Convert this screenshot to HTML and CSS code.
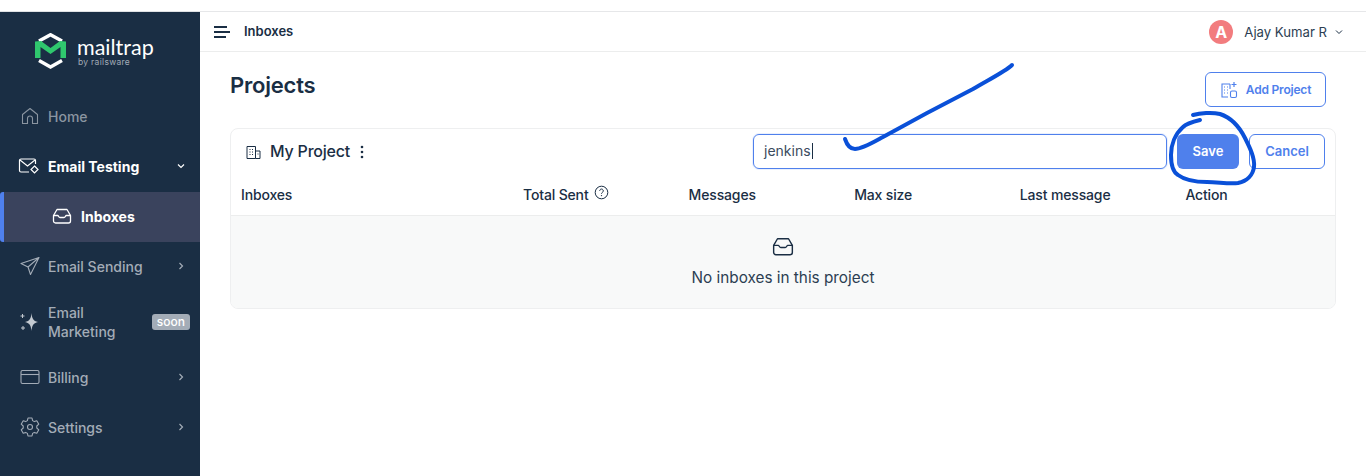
FILE: index.html
```html
<!DOCTYPE html>
<html>
  <head>
    <meta charset="UTF-8" />
    <title>Inboxes - Mailtrap</title>
    <link rel="stylesheet" href="styles.css">
  </head>
  <body>
    <div class="app">
      <aside class="sidebar">
        <div class="logo">
          <svg class="logo-mark" width="31" height="36" viewBox="0 0 31 36" fill="none">
            <path d="M4 8 15.500 1.700 27 8" stroke="#fff" stroke-width="3.400" />
            <path d="M4 27.500 15.500 34 27 27.500" stroke="#fff" stroke-width="3.400" />
            <path d="M0 8.500 6 8l9.500 7L25 8l6 .5V25h-5.500V14l-10 7-10-7v11H0z" fill="#2fc76e" />
          </svg>
          <div class="logo-text">
            <span class="logo-name">mailtrap</span>
            <span class="logo-sub">by railsware</span>
          </div>
        </div>

        <nav>
          <a class="nav-item nav-dim">
            <svg class="nav-icon" viewBox="0 0 20 20" fill="none">
              <path d="M2.500 8.500 10 2.500l7.500 6v9h-5v-5a2.500 2.500 0 0 0-5 0v5h-5z" stroke="currentColor" stroke-width="1.100" stroke-linejoin="round" />
            </svg>
            <span>Home</span>
          </a>

          <a class="nav-item nav-open">
            <svg class="nav-icon nav-icon-wide" viewBox="0 0 22 20" fill="none">
              <path d="M11 16H3a1.500 1.500 0 0 1-1.500-1.500v-10A1.500 1.500 0 0 1 3 3h13a1.500 1.500 0 0 1 1.500 1.500V8" stroke="currentColor" stroke-width="1.200" />
              <path d="m2 4 7.500 6L17 4" stroke="currentColor" stroke-width="1.200" />
              <path d="m16.500 10 3.500 3.500-3.500 3.500-3.500-3.500z" stroke="currentColor" stroke-width="1.200" />
            </svg>
            <span class="nav-label">Email Testing</span>
            <svg class="nav-arrow" viewBox="0 0 10 10" fill="none"><path d="m2 3.500 3 3 3-3" stroke="currentColor" stroke-width="1.200" /></svg>
          </a>

          <a class="nav-sub">
            <svg class="nav-icon" viewBox="0 0 20 20" fill="none">
              <path d="M5 3.500h10l3.500 6V15a2 2 0 0 1-2 2h-13a2 2 0 0 1-2-2V9.500z" stroke="currentColor" stroke-width="1.300" stroke-linejoin="round" />
              <path d="M1.500 9.500h4.200c.8 0 1 2 2.300 2h4c1.300 0 1.500-2 2.300-2h4.200" stroke="currentColor" stroke-width="1.300" />
            </svg>
            <span>Inboxes</span>
          </a>

          <a class="nav-item">
            <svg class="nav-icon" viewBox="0 0 20 20" fill="none">
              <path d="M19 1.500 1 7.500l7 3.500 2.500 7.500zM19 1.500 8 11" stroke="currentColor" stroke-width="1.100" stroke-linejoin="round" />
            </svg>
            <span class="nav-label">Email Sending</span>
            <svg class="nav-arrow" viewBox="0 0 10 10" fill="none"><path d="m3.500 2 3 3-3 3" stroke="currentColor" stroke-width="1.200" /></svg>
          </a>

          <a class="nav-item nav-tall">
            <svg class="nav-icon" viewBox="0 0 20 20" fill="#c3c9d0">
              <path d="M11.500 1c.5 5 1.500 8 6.500 9-5 1-6 4-6.500 9-.5-5-1.500-8-6.500-9 5-1 6-4 6.500-9z" />
              <path d="M.5 4h4M2.500 2v4M1 16h4M3 14v4" stroke="#c3c9d0" stroke-width="1" />
            </svg>
            <span class="nav-label">Email<br />Marketing</span>
            <span class="badge">soon</span>
          </a>

          <a class="nav-item">
            <svg class="nav-icon" viewBox="0 0 20 20" fill="none">
              <rect x="1" y="3.500" width="18" height="13" rx="1.500" stroke="currentColor" stroke-width="1.100" />
              <path d="M1 7.500h18" stroke="currentColor" stroke-width="1.100" />
            </svg>
            <span class="nav-label">Billing</span>
            <svg class="nav-arrow" viewBox="0 0 10 10" fill="none"><path d="m3.500 2 3 3-3 3" stroke="currentColor" stroke-width="1.200" /></svg>
          </a>

          <a class="nav-item">
            <svg class="nav-icon" viewBox="0 0 20 20" fill="none">
              <path d="M8 1h4l.6 2.600 1.700 1 2.500-.8 2 3.400-2 1.800v2l2 1.800-2 3.400-2.500-.8-1.700 1L12 19H8l-.6-2.600-1.700-1-2.500.8-2-3.400 2-1.800v-2l-2-1.800 2-3.400 2.500.8 1.700-1z" stroke="currentColor" stroke-width="1.100" stroke-linejoin="round" />
              <circle cx="10" cy="10" r="2.500" stroke="currentColor" stroke-width="1.100" />
            </svg>
            <span class="nav-label">Settings</span>
            <svg class="nav-arrow" viewBox="0 0 10 10" fill="none"><path d="m3.500 2 3 3-3 3" stroke="currentColor" stroke-width="1.200" /></svg>
          </a>
        </nav>
      </aside>

      <div class="content">
        <header class="topbar">
          <svg class="menu-icon" width="16" height="12" viewBox="0 0 16 12" fill="none">
            <path d="M0 1h13M0 6h16M0 11h12" stroke="#1a2e44" stroke-width="2" />
          </svg>
          <span class="crumb">Inboxes</span>
          <div class="user">
            <span class="avatar">A</span>
            <span>Ajay Kumar R</span>
            <svg width="8" height="8" viewBox="0 0 8 8" fill="none"><path d="m1 2.500 3 3 3-3" stroke="#1a2e44" stroke-width="1" /></svg>
          </div>
        </header>

        <main class="page">
          <div class="page-head">
            <h1>Projects</h1>
            <button class="btn btn-outline btn-add">
              <svg width="18" height="18" viewBox="0 0 18 18" fill="none">
                <path d="M10 3H2v13h6M10 3v5" stroke="#4f80ec" stroke-width="1.100" />
                <path d="M14 1v5M11.500 3.500h5" stroke="#4f80ec" stroke-width="1.200" />
                <rect x="10.500" y="10" width="6" height="6.500" rx="1.500" stroke="#4f80ec" stroke-width="1.100" />
                <path d="M4 6h1M7 6h1M4 9h1M7 9h1M4 12h1M7 12h1" stroke="#4f80ec" stroke-width="1.200" />
              </svg>
              Add Project
            </button>
          </div>

          <section class="card">
            <div class="project-row">
              <svg class="project-icon" width="15" height="15" viewBox="0 0 15 15" fill="none">
                <path d="M9.500 13.500h-8.500V1.500h8.500zM9.500 6H14v7.500H9.500" stroke="#1a2e44" stroke-width="1" />
                <path d="M3.500 4.500h1M6 4.500h1M3.500 7h1M6 7h1M3.500 9.500h1M6 9.500h1M11.500 9h1" stroke="#1a2e44" stroke-width="1" />
              </svg>
              <span class="project-name">My Project</span>
              <svg class="dots" width="4" height="14" viewBox="0 0 4 14" fill="#1a2e44">
                <circle cx="2" cy="2" r="1.300" /><circle cx="2" cy="7" r="1.300" /><circle cx="2" cy="12" r="1.300" />
              </svg>
              <div class="name-input">jenkins<span class="caret"></span></div>
              <button class="btn btn-save">Save</button>
              <button class="btn btn-outline btn-cancel">Cancel</button>
            </div>

            <div class="cols">
              <span>Inboxes</span>
              <span class="col-help">Total Sent
                <svg width="15" height="15" viewBox="0 0 15 15" fill="none">
                  <circle cx="7.500" cy="7.500" r="6.300" stroke="#1a2e44" stroke-width="1" />
                  <path d="M5.700 5.800a1.800 1.800 0 1 1 2.700 1.600c-.6.400-.9.700-.9 1.300" stroke="#1a2e44" stroke-width="1" />
                  <circle cx="7.500" cy="10.600" r=".7" fill="#1a2e44" />
                </svg>
              </span>
              <span>Messages</span>
              <span>Max size</span>
              <span>Last message</span>
              <span>Action</span>
            </div>

            <div class="empty">
              <svg width="22" height="20" viewBox="0 0 20 18" fill="none">
                <path d="M5 1.500h10l3.500 6V14a2 2 0 0 1-2 2h-13a2 2 0 0 1-2-2V7.500z" stroke="#1a2e44" stroke-width="1.300" stroke-linejoin="round" />
                <path d="M1.500 7.500h4.200c.8 0 1 2 2.300 2h4c1.300 0 1.500-2 2.300-2h4.200" stroke="#1a2e44" stroke-width="1.300" />
              </svg>
              <p>No inboxes in this project</p>
            </div>
          </section>
        </main>
      </div>
    </div>

    <!-- pen marks drawn on top of the screenshot -->
    <svg class="ink" width="1366" height="476" viewBox="0 0 1366 476" fill="none">
      <path d="M1012 65C1006 71 990 79 973 89L927 113 883 137C872 143 862 149 855 149 850 149 847 145 845 139" />
      <path d="M1200 120C1192 122 1186 124 1183 127 1175 134 1171 145 1171 155 1171 165 1173 172 1178 175 1186 181 1196 182 1207 182 1218 182 1228 184 1238 183 1247 181 1253 175 1254 167 1255 158 1250 148 1245 138 1240 128 1232 118 1220 114 1212 112 1200 113 1193 115" />
    </svg>
  </body>
</html>
```

FILE: styles.css
```css
* {
  box-sizing: border-box;
}

body {
  margin: 0;
  height: 476px;
  overflow: hidden;
  background: #fff;
  color: #1a2e44;
  font-family: "Inter", "Liberation Sans", sans-serif;
  font-size: 14px;
}

.app {
  display: flex;
  height: 476px;
  padding-top: 11px;
}

.sidebar {
  width: 200px;
  flex-shrink: 0;
  background: #1a2e44;
  border-top: 1px solid #dfe1e4;
  color: #a3acb7;
}

.logo {
  height: 80px;
  display: flex;
  align-items: center;
  gap: 11px;
  padding: 0 0 2px 35px;
}

.logo-text {
  display: flex;
  flex-direction: column;
  color: #fff;
}

.logo-name {
  margin-top: 3px;
  font-family: "Lato", sans-serif;
  font-size: 21.500px;
  line-height: 19px;
}

.logo-sub {
  font-size: 8.500px;
  line-height: 10px;
  letter-spacing: 0.3px;
  margin-left: 1px;
  color: #a3acb7;
}

.nav-item {
  height: 50px;
  display: flex;
  align-items: center;
  gap: 8px;
  padding: 0 14px 2px 20px;
  font-weight: 500;
}

.nav-dim {
  color: #8b95a1;
}

.nav-tall {
  height: 61px;
  line-height: 19px;
  padding-right: 10px;
}

.nav-icon {
  width: 20px;
  height: 20px;
  flex-shrink: 0;
}

.nav-icon-wide {
  width: 22px;
  margin: 0 0 0 -2px;
}

.nav-label {
  flex: 1;
}

.nav-arrow {
  width: 10px;
  height: 10px;
}

.nav-open {
  color: #fff;
  font-weight: 700;
}

.nav-sub {
  height: 50px;
  display: flex;
  align-items: center;
  gap: 9px;
  padding: 0 0 2px 48px;
  background: #3a435d;
  border-left: 4px solid #4f80ec;
  border-radius: 3px 0 0 3px;
  color: #fff;
  font-weight: 700;
}

.badge {
  background: #a3acb7;
  color: #fff;
  font-size: 12px;
  line-height: 16px;
  padding: 0 5px;
  border-radius: 3px;
}

.content {
  flex: 1;
  min-width: 0;
  border-top: 1px solid #e6e7e9;
}

.topbar {
  height: 40px;
  display: flex;
  align-items: center;
  padding: 0 23px 0 14px;
  border-bottom: 1px solid #eceded;
}

.crumb {
  margin-left: 14px;
  padding-bottom: 2px;
  font-size: 13px;
  font-weight: 600;
}

.user {
  margin-left: auto;
  display: flex;
  align-items: center;
  gap: 8px;
  font-size: 13.150px;
  color: #2c3e52;
}

.avatar {
  width: 24px;
  height: 24px;
  margin-right: 3px;
  border-radius: 50%;
  background: #f27c7e;
  color: #fff;
  font-size: 16px;
  font-weight: 700;
  display: flex;
  align-items: center;
  justify-content: center;
}

.page {
  padding: 20px 30px 0;
}

.page-head {
  height: 56px;
  display: flex;
  justify-content: space-between;
  align-items: flex-start;
}

h1 {
  margin: 0;
  font-size: 22px;
  line-height: 26px;
  font-weight: 600;
  letter-spacing: -0.2px;
}

.btn {
  height: 35px;
  padding: 0 0 2px;
  border-radius: 6px;
  font-family: inherit;
  font-size: 13px;
  font-weight: 600;
  cursor: pointer;
}

.btn-outline {
  background: #fff;
  border: 1px solid #4f80ec;
  color: #4f80ec;
}

.btn-add {
  width: 121px;
  margin-right: 10px;
  display: flex;
  align-items: center;
  justify-content: center;
  gap: 8px;
  padding: 0;
  font-size: 12px;
  letter-spacing: -0.2px;
}

.btn-save {
  width: 62px;
  margin-left: 10px;
  background: #4f80ec;
  border: none;
  color: #fff;
}

.btn-cancel {
  width: 76px;
  margin-left: 10px;
}

.card {
  width: 1106px;
  height: 181px;
  border: 1px solid #eeeff0;
  border-radius: 8px;
  overflow: hidden;
}

.project-row {
  height: 46px;
  display: flex;
  align-items: flex-start;
  padding: 5px 10px 0 15px;
}

.project-icon {
  margin-top: 11px;
}

.project-name {
  margin-left: 9px;
  font-size: 16px;
  line-height: 35px;
  font-weight: 500;
  letter-spacing: -0.2px;
}

.dots {
  margin: 11px 0 0 10px;
}

.name-input {
  width: 414px;
  height: 35px;
  margin-left: auto;
  padding: 0 0 2px 10px;
  border: 1px solid #4f80ec;
  border-radius: 6px;
  box-shadow: 0 0 0 1px rgba(79, 128, 236, 0.12);
  display: flex;
  align-items: center;
  font-size: 14px;
  color: #3b4b5e;
}

.caret {
  width: 1px;
  height: 16px;
  margin-left: 1px;
  background: #1a2e44;
}

.cols {
  height: 41px;
  display: grid;
  grid-template-columns: 282px repeat(5, 165.6px);
  align-items: center;
  padding: 0 0 1px 10px;
  font-weight: 500;
  letter-spacing: -0.15px;
  border-bottom: 1px solid #eceded;
}

.col-help {
  display: flex;
  align-items: center;
  gap: 5px;
}

.col-help svg {
  margin-top: -4px;
}

.empty {
  height: 92px;
  background: #f8f9f9;
  display: flex;
  flex-direction: column;
  align-items: center;
  padding-top: 21px;
  font-size: 15.300px;
}

.empty p {
  margin: 11px 0 0;
  line-height: 20px;
  color: #2c3e52;
}

.ink {
  position: absolute;
  left: 0;
  top: 0;
  pointer-events: none;
  stroke: #0a50d8;
  stroke-width: 4;
  stroke-linecap: round;
  stroke-linejoin: round;
}
```
